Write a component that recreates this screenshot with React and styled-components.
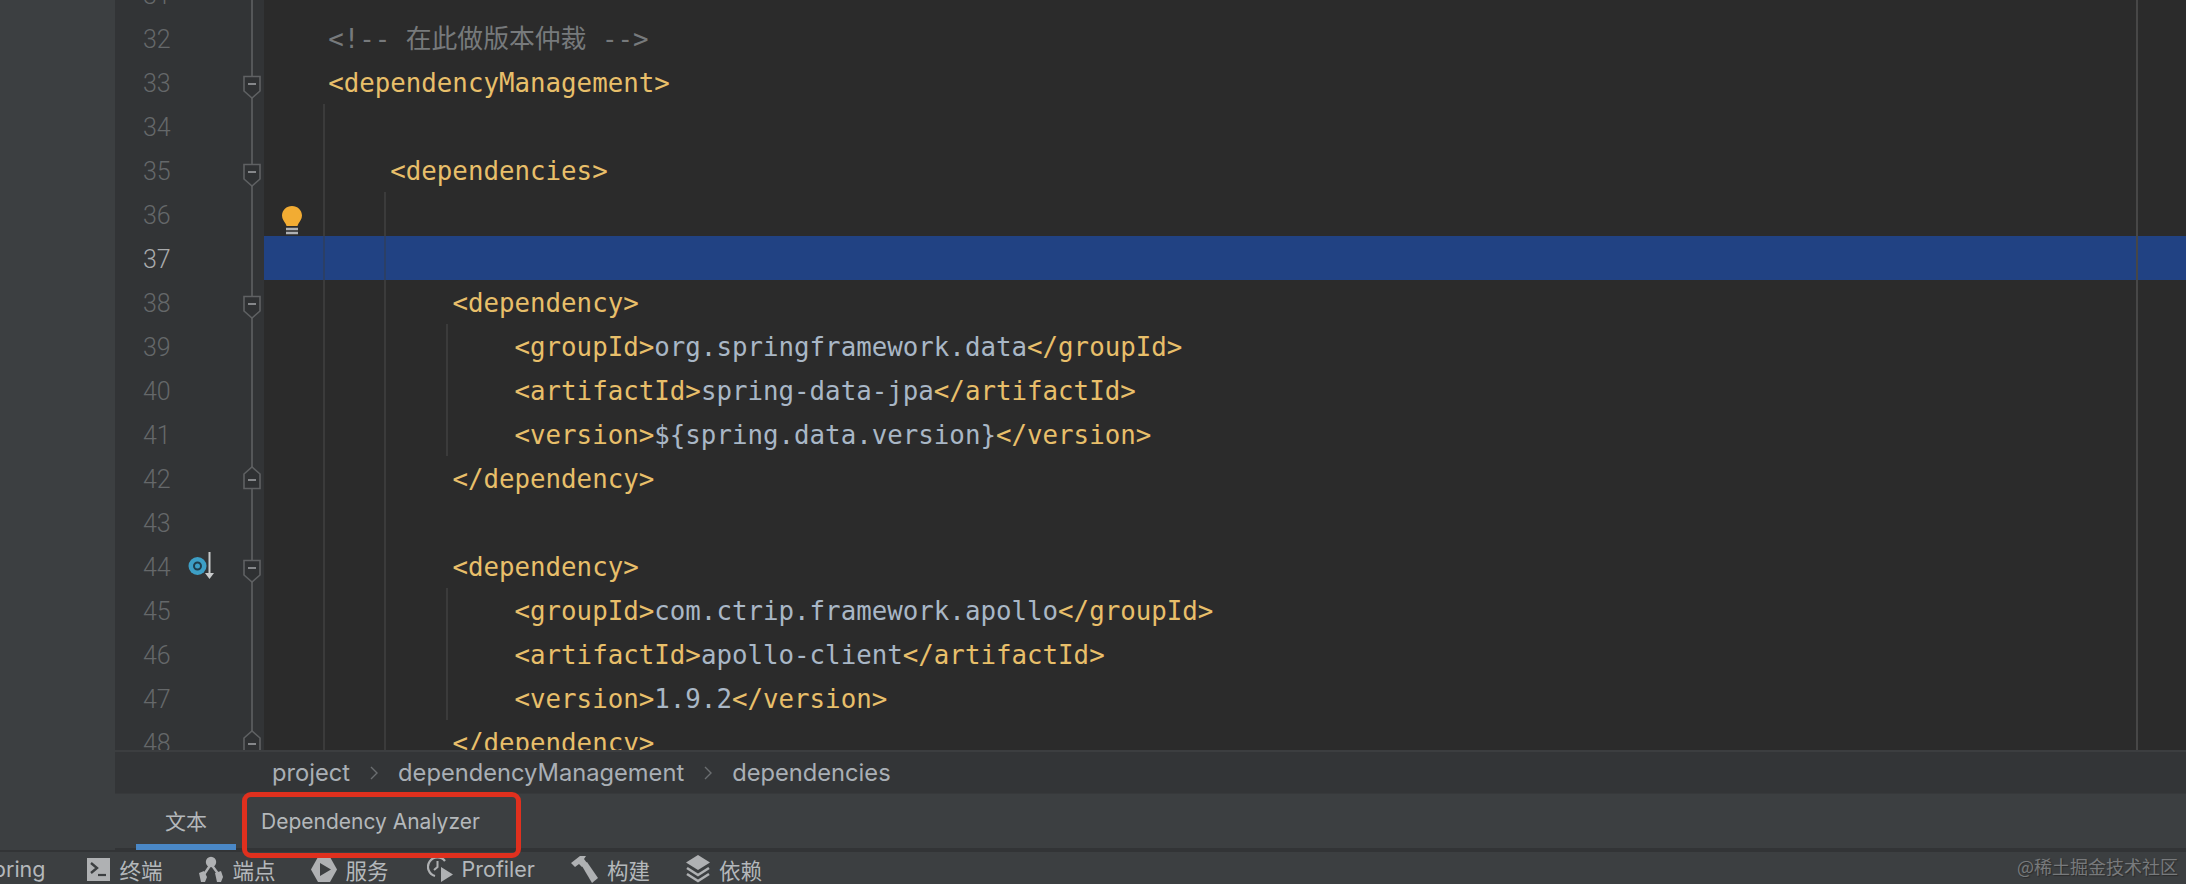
import React from "react";
import styled, { createGlobalStyle } from "styled-components";

const GlobalStyle = createGlobalStyle`
  html, body {
    margin: 0;
    padding: 0;
    background: #3c3f41;
    overflow: hidden;
  }
`;

const uiFont = `Inter, "Noto Sans CJK SC", sans-serif`;
const monoFont = `"DejaVu Sans Mono", "Noto Sans CJK SC", monospace`;

const Page = styled.div`
  position: relative;
  width: 2186px;
  height: 884px;
  display: flex;
  flex-direction: column;
  overflow: hidden;
  background: #3c3f41;
  font-family: ${uiFont};
`;
const Workspace = styled.div`
  display: flex;
  height: 850px;
`;
const Sidebar = styled.div`
  width: 115px;
  flex: none;
  background: #3c3f41;
`;
const MainColumn = styled.div`
  flex: 1;
  min-width: 0;
  display: flex;
  flex-direction: column;
`;
const Editor = styled.div`
  position: relative;
  height: 750px;
  flex: none;
  overflow: hidden;
  background: #2b2b2b;

  /* right margin guide */
  &::after {
    content: "";
    position: absolute;
    top: 0;
    bottom: 0;
    left: 2021px;
    width: 2px;
    background: #474747;
  }
`;
const Lines = styled.div`
  margin-top: -28px;
`;
const Row = styled.div`
  display: flex;
  height: 44px;
`;
const Gutter = styled.div`
  position: relative;
  width: 149px;
  flex: none;
  background: #323436;

  /* fold line */
  &::after {
    content: "";
    position: absolute;
    top: 0;
    bottom: 0;
    left: 136px;
    width: 2px;
    background: #555759;
  }
`;
const LineNumber = styled.span`
  position: absolute;
  left: 28px;
  top: 0;
  line-height: 47px;
  font-family: Roboto, sans-serif;
  font-size: 25px;
  font-weight: 300;
  color: ${(p) => (p.$current ? "#a9abad" : "#65686a")};
`;
const FoldMark = styled.svg`
  position: absolute;
  z-index: 1;
  left: 128px;
  top: ${(p) => (p.$end ? "10px" : "15px")};
`;
const BreakIcon = styled.svg`
  position: absolute;
  left: 72px;
  top: 7px;
`;
const CodeCell = styled.div`
  position: relative;
  flex: 1;
  min-width: 0;
  padding-left: 2px;
  background: ${(p) => (p.$selected ? "#214283" : "transparent")};
  font-family: ${monoFont};
  font-size: 25.8px;
  line-height: 47px;
  height: 44px;
  white-space: pre;
`;
const IndentGuide = styled.span`
  position: absolute;
  top: 0;
  bottom: 0;
  left: ${(p) => p.$left}px;
  width: 2px;
  background: ${(p) => (p.$selected ? "#2b3f66" : "#3b3b3b")};
`;
const Bulb = styled.svg`
  position: absolute;
  left: 18px;
  top: 14px;
`;
const Tag = styled.span`
  color: #e8bf6a;
`;
const Value = styled.span`
  color: #a9b7c6;
`;
const Comment = styled.span`
  color: #777a7c;
`;

const Breadcrumbs = styled.div`
  height: 43px;
  flex: none;
  display: flex;
  align-items: center;
  gap: 20px;
  padding-left: 157px;
  background: #333537;
  border-top: 2px solid #3c3e40;
  box-sizing: border-box;
  font-size: 23.7px;
  color: #a9afb5;
`;
const Chevron = styled.svg`
  flex: none;
`;
const TabBar = styled.div`
  height: 57px;
  flex: none;
  display: flex;
  padding-left: 21px;
  background: #3c3f41;
  border-top: 1px solid #37393b;
  box-sizing: border-box;
  box-shadow: inset 0 -2px 0 #323436;
`;
const Tab = styled.div`
  position: relative;
  width: ${(p) => p.$width}px;
  box-sizing: border-box;
  padding-top: 12px;
  padding-left: ${(p) => p.$inset}px;
  font-size: 21px;
  line-height: 32px;
  color: #b4b8bb;
  border-bottom: 6px solid ${(p) => (p.$active ? "#4a88c7" : "transparent")};
`;
const AnalyzerHighlight = styled.div`
  position: absolute;
  left: 242px;
  top: 792px;
  width: 279px;
  height: 66px;
  box-sizing: border-box;
  border: 5px solid #e0301e;
  border-radius: 9px;
`;
const StatusBar = styled.div`
  flex: none;
  height: 34px;
  display: flex;
  align-items: center;
  gap: 35px;
  margin-left: -21px;
  padding-top: 2px;
  box-sizing: border-box;
  font-size: 21.5px;
  color: #b4b8bb;
  border-top: 2px solid #323436;
`;
const StatusItem = styled.div`
  display: flex;
  align-items: center;
  gap: 9px;
  white-space: nowrap;
  margin-right: ${(p) => p.$after || 0}px;
`;
const Watermark = styled.div`
  position: absolute;
  right: 8px;
  bottom: 7px;
  font-family: "Noto Sans CJK SC", sans-serif;
  font-size: 18px;
  line-height: 22px;
  color: #787a7c;
  text-shadow: 1px 1px 1px #2b2b2b;
`;

const FoldIcon = ({ end }) => (
  <FoldMark $end={end} width="18" height="24" viewBox="0 0 18 24">
    <path
      d={end ? "M1 22.5H17V8L9 1 1 8Z" : "M1 1.5H17V16L9 23 1 16Z"}
      fill="#2f3133"
      stroke="#5f6163"
      strokeWidth="1.6"
    />
    <path d={end ? "M5 14H13" : "M5 9H13"} stroke="#85878a" strokeWidth="2" />
  </FoldMark>
);

const OverrideIcon = () => (
  <BreakIcon width="28" height="30" viewBox="0 0 28 30">
    <circle cx="10.500" cy="15" r="9" fill="#3d9fc6" />
    <circle cx="10.500" cy="15" r="3.500" fill="none" stroke="#1f3d4c" strokeWidth="2" />
    <path d="M22.500 1V23" stroke="#c8cacb" strokeWidth="2" />
    <path d="M18 22H27L22.500 28Z" fill="#c8cacb" />
  </BreakIcon>
);

const BulbIcon = () => (
  <Bulb width="20" height="30" viewBox="0 0 20 30">
    <path
      d="M10 0C4.500 0 0 4.200 0 9.600c0 3.600 2.200 5.800 3.600 8.200.5.900.7 1.400.9 2.200h11c.2-.8.4-1.300.9-2.200C17.800 15.400 20 13.200 20 9.600 20 4.200 15.500 0 10 0Z"
      fill="#f2ac33"
    />
    <path d="M4 23H16M4 27H16" stroke="#afb1b3" strokeWidth="2.4" />
  </Bulb>
);

const ChevronIcon = () => (
  <Chevron width="8" height="14" viewBox="0 0 8 14">
    <path d="M1 1L7 7 1 13" fill="none" stroke="#6b6e70" strokeWidth="1.4" />
  </Chevron>
);

const TerminalIcon = () => (
  <svg width="23" height="23" viewBox="0 0 23 23">
    <path d="M0 0H23V23H0Z" fill="#afb1b3" />
    <path d="M4 5L10 10 4 15" fill="none" stroke="#3c3f41" strokeWidth="2.4" />
    <path d="M11 17H19" stroke="#3c3f41" strokeWidth="2.2" />
  </svg>
);

const EndpointsIcon = () => (
  <svg width="26" height="27" viewBox="0 0 26 27">
    <g stroke="#afb1b3" strokeWidth="2.4" fill="none">
      <path d="M13 8L5 20M13 8L21 19" />
    </g>
    <circle cx="13" cy="6" r="5.200" fill="#afb1b3" />
    <path d="M1 17L6 15 9 21 7 26 3 26Z" fill="#afb1b3" />
    <path d="M17 17L23 15 25 21 23 26 19 26Z" fill="#afb1b3" />
  </svg>
);

const ServicesIcon = () => (
  <svg width="26" height="27" viewBox="0 0 26 27">
    <path d="M7 1H19L26 13.500 19 26H7L0 13.500Z" fill="#afb1b3" />
    <path d="M9 7L20 13.500 9 20Z" fill="#3c3f41" />
  </svg>
);

const ProfilerIcon = () => (
  <svg width="26" height="26" viewBox="0 0 26 26">
    <path
      d="M18 5A9.500 9.500 0 1 0 8 20"
      fill="none"
      stroke="#afb1b3"
      strokeWidth="2.200"
    />
    <path d="M10.500 5V11L7 14" fill="none" stroke="#afb1b3" strokeWidth="2" />
    <path d="M14 11L26 18.500 14 26Z" fill="#afb1b3" />
  </svg>
);

const HammerIcon = () => (
  <svg width="27" height="27" viewBox="0 0 27 27">
    <path d="M0 7L9 0 15 0 13 3 16 7 11 11 8 8 4 11Z" fill="#afb1b3" />
    <path d="M11 10L16 6 27 22 21 27Z" fill="#afb1b3" />
  </svg>
);

const LayersIcon = () => (
  <svg width="24" height="28" viewBox="0 0 24 28">
    <path d="M12 0L24 7.500 12 15 0 7.500Z" fill="#afb1b3" />
    <path d="M1 13L12 20 23 13" fill="none" stroke="#afb1b3" strokeWidth="2.600" />
    <path d="M1 19L12 26 23 19" fill="none" stroke="#afb1b3" strokeWidth="2.600" />
  </svg>
);

const element = (name, value) => (
  <>
    <Tag>{`<${name}>`}</Tag>
    <Value>{value}</Value>
    <Tag>{`</${name}>`}</Tag>
  </>
);

const pad = (n) => " ".repeat(n);

const GUIDE_ONE = 59;
const GUIDE_TWO = 120;
const GUIDE_THREE = 182;

const lines = [
  { n: 31 },
  {
    n: 32,
    code: (
      <Comment>{pad(4)}{"<!-- 在此做版本仲裁 -->"}</Comment>
    ),
  },
  { n: 33, fold: "start", code: <Tag>{pad(4)}{"<dependencyManagement>"}</Tag> },
  { n: 34, guides: [GUIDE_ONE] },
  {
    n: 35,
    fold: "start",
    guides: [GUIDE_ONE],
    code: <Tag>{pad(8)}{"<dependencies>"}</Tag>,
  },
  { n: 36, guides: [GUIDE_ONE, GUIDE_TWO], bulb: true },
  { n: 37, guides: [GUIDE_ONE, GUIDE_TWO], selected: true },
  {
    n: 38,
    fold: "start",
    guides: [GUIDE_ONE, GUIDE_TWO],
    code: <Tag>{pad(12)}{"<dependency>"}</Tag>,
  },
  {
    n: 39,
    guides: [GUIDE_ONE, GUIDE_TWO, GUIDE_THREE],
    code: <>{pad(16)}{element("groupId", "org.springframework.data")}</>,
  },
  {
    n: 40,
    guides: [GUIDE_ONE, GUIDE_TWO, GUIDE_THREE],
    code: <>{pad(16)}{element("artifactId", "spring-data-jpa")}</>,
  },
  {
    n: 41,
    guides: [GUIDE_ONE, GUIDE_TWO, GUIDE_THREE],
    code: <>{pad(16)}{element("version", "${spring.data.version}")}</>,
  },
  {
    n: 42,
    fold: "end",
    guides: [GUIDE_ONE, GUIDE_TWO],
    code: <Tag>{pad(12)}{"</dependency>"}</Tag>,
  },
  { n: 43, guides: [GUIDE_ONE, GUIDE_TWO] },
  {
    n: 44,
    fold: "start",
    override: true,
    guides: [GUIDE_ONE, GUIDE_TWO],
    code: <Tag>{pad(12)}{"<dependency>"}</Tag>,
  },
  {
    n: 45,
    guides: [GUIDE_ONE, GUIDE_TWO, GUIDE_THREE],
    code: <>{pad(16)}{element("groupId", "com.ctrip.framework.apollo")}</>,
  },
  {
    n: 46,
    guides: [GUIDE_ONE, GUIDE_TWO, GUIDE_THREE],
    code: <>{pad(16)}{element("artifactId", "apollo-client")}</>,
  },
  {
    n: 47,
    guides: [GUIDE_ONE, GUIDE_TWO, GUIDE_THREE],
    code: <>{pad(16)}{element("version", "1.9.2")}</>,
  },
  {
    n: 48,
    fold: "end",
    guides: [GUIDE_ONE, GUIDE_TWO],
    code: <Tag>{pad(12)}{"</dependency>"}</Tag>,
  },
];

const toolWindows = [
  { label: "Spring", after: 7 },
  { label: "终端", icon: <TerminalIcon /> },
  { label: "端点", icon: <EndpointsIcon /> },
  { label: "服务", icon: <ServicesIcon />, after: 3 },
  { label: "Profiler", icon: <ProfilerIcon />, after: 1 },
  { label: "构建", icon: <HammerIcon />, after: 1 },
  { label: "依赖", icon: <LayersIcon /> },
];

function App() {
  return (
    <Page>
      <GlobalStyle />
      <Workspace>
        <Sidebar />
        <MainColumn>
          <Editor>
            <Lines>
              {lines.map((line) => (
                <Row key={line.n}>
                  <Gutter>
                    <LineNumber $current={line.selected}>{line.n}</LineNumber>
                    {line.override && <OverrideIcon />}
                    {line.fold && <FoldIcon end={line.fold === "end"} />}
                  </Gutter>
                  <CodeCell $selected={line.selected}>
                    {(line.guides || []).map((left) => (
                      <IndentGuide
                        key={left}
                        $left={left}
                        $selected={line.selected}
                      />
                    ))}
                    {line.bulb && <BulbIcon />}
                    {line.code}
                  </CodeCell>
                </Row>
              ))}
            </Lines>
          </Editor>
          <Breadcrumbs>
            <span>project</span>
            <ChevronIcon />
            <span>dependencyManagement</span>
            <ChevronIcon />
            <span>dependencies</span>
          </Breadcrumbs>
          <TabBar>
            <Tab $active $width={100} $inset={29}>
              文本
            </Tab>
            <Tab $width={280} $inset={25}>
              Dependency Analyzer
            </Tab>
          </TabBar>
        </MainColumn>
      </Workspace>
      <StatusBar>
        {toolWindows.map((item) => (
          <StatusItem key={item.label} $after={item.after}>
            {item.icon}
            <span>{item.label}</span>
          </StatusItem>
        ))}
      </StatusBar>
      <AnalyzerHighlight />
      <Watermark>@稀土掘金技术社区</Watermark>
    </Page>
  );
}

export default App;
